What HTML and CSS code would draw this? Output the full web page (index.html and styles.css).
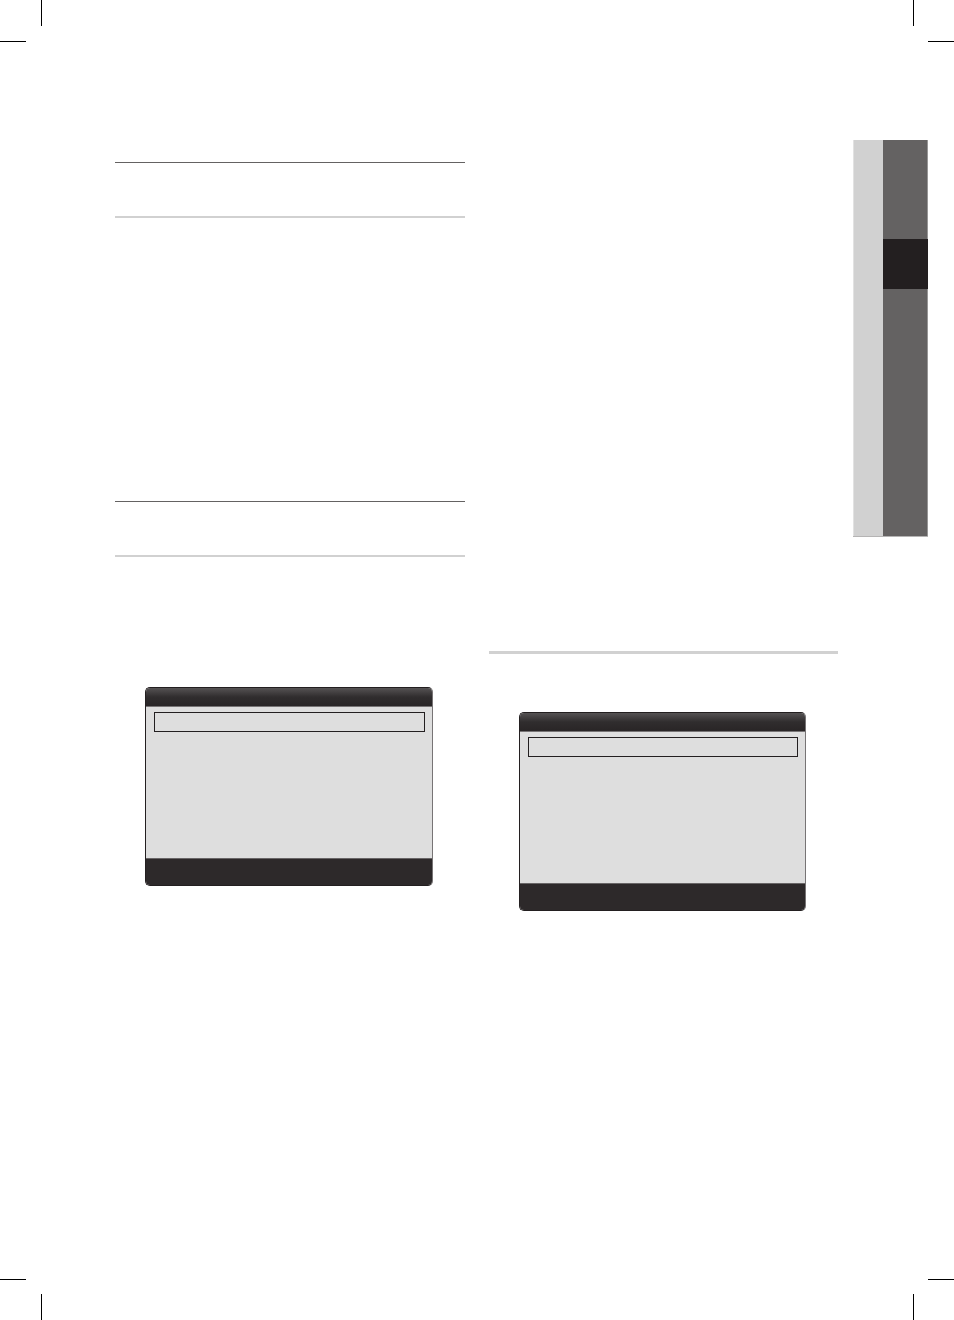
FILE: index.html
```html
<!DOCTYPE html>
<html lang="en">
<head>
<meta charset="utf-8">
<meta name="viewport" content="width=device-width, initial-scale=1">
<title>Manual page</title>
<link rel="stylesheet" href="styles.css">
</head>
<body>
<div class="sheet">
  <div class="crop crop-top crop-left"></div>
  <div class="crop crop-top crop-right"></div>
  <div class="crop crop-bottom crop-left"></div>
  <div class="crop crop-bottom crop-right"></div>
  <main class="columns">
    <div class="column">
      <section class="topic topic-tall">
        <header class="topic-head"></header>
      </section>
      <section class="topic">
        <header class="topic-head"></header>
        <div class="screen">
          <div class="screen-title"></div>
          <div class="screen-body"><div class="screen-selected"></div></div>
          <div class="screen-footer"></div>
        </div>
      </section>
    </div>
    <div class="column column-late">
      <section class="subtopic">
        <div class="screen">
          <div class="screen-title"></div>
          <div class="screen-body"><div class="screen-selected"></div></div>
          <div class="screen-footer"></div>
        </div>
      </section>
    </div>
    <aside class="chapter">
      <div class="chapter-strip"></div>
      <div class="chapter-tabs"><div class="chapter-current"></div></div>
    </aside>
  </main>
</div>
</body>
</html>
```
FILE: styles.css
```css
* {
  box-sizing: border-box;
}

body {
  margin: 0;
  background: #fff;
  font-family: "Liberation Sans", Arial, sans-serif;
}

.sheet {
  position: relative;
  min-height: 100vh;
  padding: 140px 26px 60px 115px;
}

/* Printer's crop marks, laid over the sheet's corners */
.crop {
  position: absolute;
  width: 42px;
  height: 42px;
  background-image: linear-gradient(#000, #000), linear-gradient(#000, #000);
  background-size: 26px 1px, 1px 26px;
  background-repeat: no-repeat;
}

.crop-top { top: 0; }
.crop-bottom { bottom: 0; }
.crop-left { left: 0; }
.crop-right { right: 0; }

.crop-top.crop-left { background-position: left bottom, right top; }
.crop-top.crop-right { background-position: right bottom, 1px top; }
.crop-bottom.crop-left { background-position: left 1px, right bottom; }
.crop-bottom.crop-right { background-position: right 1px, 1px bottom; }

.columns {
  display: grid;
  grid-template-columns: 1fr 1fr 90px;
  align-items: start;
}

.column {
  padding-top: 22px;
  padding-right: 12px;
}

.column-late {
  padding: 511px 0 0 12px;
}

.topic-tall {
  min-height: 339px;
}

.topic-head {
  height: 56px;
  margin-bottom: 130px;
  border-top: 1px solid #646262;
  border-bottom: 2px solid #d1d1d1;
}

.subtopic {
  padding-top: 58px;
  border-top: 3px solid #d1d1d1;
}

.screen {
  margin: 0 32px 0 30px;
  overflow: hidden;
  border: 1px solid #231f20;
  border-right-color: #777475;
  border-radius: 5px;
  background: #dedede;
}

.screen-title {
  height: 19px;
  border-bottom: 1px solid #777475;
  background: linear-gradient(#555253, #302d2e 50%, #292526);
}

.screen-body {
  height: 151px;
  padding: 5px 7px 0 8px;
}

.screen-selected {
  height: 20px;
  border: 1px solid #231f20;
}

.screen-footer {
  height: 27px;
  border-top: 1px solid #686566;
  background: #2d292a;
}

.chapter {
  display: flex;
  height: 397px;
  margin-left: 15px;
  border-bottom: 1px solid #b5b4b4;
}

.chapter-strip {
  flex: 0 0 30px;
  border-left: 1px solid #e2e2e2;
  background: #d1d1d1;
}

.chapter-tabs {
  flex: 1;
  padding-top: 99px;
  background: linear-gradient(to left, #979696 1px, #646262 1px);
}

.chapter-current {
  height: 50px;
  background: #231f20;
}
```
